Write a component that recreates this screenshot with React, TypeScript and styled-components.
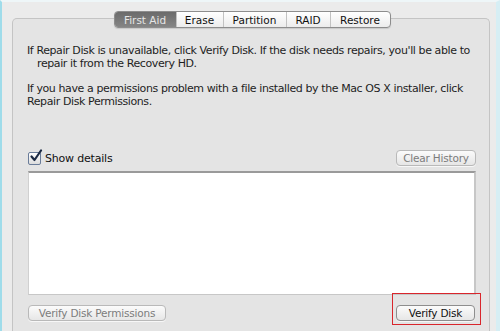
import React from 'react'
import styled, { createGlobalStyle } from 'styled-components'

const GlobalStyle = createGlobalStyle`
  html, body {
    margin: 0;
    padding: 0;
  }
  body {
    width: 500px;
    height: 331px;
    overflow: hidden;
    background: #ebebeb;
    font-family: 'DejaVu Sans', 'Liberation Sans', sans-serif;
    color: #1e1e1e;
  }
`

const Window = styled.div`
  width: 500px;
  height: 331px;
  box-sizing: border-box;
  background: #ebebeb;
  border-left: 2px solid #9fdcea;
  border-top: 2px solid #eef6f8;
  border-right: 4px solid #d6eef4;
  padding: 16px 6px 0 10px;
  overflow: hidden;
`

const GroupBox = styled.div`
  height: 330px;
  box-sizing: border-box;
  border: 1px solid #c4c4c4;
  border-bottom: none;
  border-radius: 5px 5px 0 0;
  background: #e4e4e4;
  display: flex;
  flex-direction: column;
  padding: 0 13px 0 14px;
`

const TabBar = styled.div`
  display: flex;
  align-self: center;
  margin: -8px 0 0 1px;
  border: 1px solid #8d8d8d;
  border-radius: 4px;
  background: linear-gradient(#ffffff, #ececec);
  box-shadow: 0 1px 1px rgba(0, 0, 0, 0.12);
  overflow: hidden;
`

const Tab = styled.div<{ $active?: boolean; $w: number }>`
  width: ${p => p.$w}px;
  height: 15px;
  display: flex;
  align-items: center;
  justify-content: center;
  font-size: 10.5px;
  color: ${p => (p.$active ? '#e6e6e6' : '#111')};
  background: ${p => (p.$active ? 'linear-gradient(#6b6b6b, #858585)' : 'transparent')};
  border-left: 1px solid ${p => (p.$active ? 'transparent' : '#c2c2c2')};
  &:first-child {
    border-left: none;
  }
`

const Paragraph = styled.p<{ $hanging?: boolean }>`
  margin: 0;
  font-size: 11px;
  line-height: 13px;
  letter-spacing: -0.4px;
  padding-left: ${p => (p.$hanging ? 10 : 0)}px;
  text-indent: ${p => (p.$hanging ? -10 : 0)}px;
`

const Intro = styled.div`
  display: flex;
  flex-direction: column;
  gap: 12px;
  margin-top: 16px;
`

const DetailsRow = styled.div`
  display: flex;
  align-items: center;
  justify-content: space-between;
  margin-top: 42px;
  padding-left: 1px;
`

const CheckLabel = styled.label`
  display: flex;
  align-items: center;
  gap: 4px;
  font-size: 11px;
  letter-spacing: -0.2px;
  color: #111;
`

const CheckBox = styled.span`
  width: 11px;
  height: 11px;
  border: 1px solid #6a7c99;
  border-radius: 2px;
  background: linear-gradient(#ffffff, #dcdcdc);
  position: relative;
  display: block;
`

const SmallButton = styled.div<{ $disabled?: boolean; $w: number }>`
  width: ${p => p.$w}px;
  height: 16px;
  box-sizing: border-box;
  display: flex;
  align-items: center;
  justify-content: center;
  font-size: 10.5px;
  letter-spacing: -0.2px;
  color: ${p => (p.$disabled ? '#7c7c7c' : '#111')};
  border: 1px solid ${p => (p.$disabled ? '#b9b9b9' : '#8e8e8e')};
  border-radius: 4px;
  background: linear-gradient(#fbfbfb, #e6e6e6);
  box-shadow: 0 1px 0 rgba(255, 255, 255, 0.7);
`

const LogArea = styled.div`
  margin-top: 5px;
  margin-left: 1px;
  height: 121px;
  background: #ffffff;
  border-top: 2px solid #9a9a9a;
  border-right: 2px solid #c7c7c7;
  border-bottom: 1px solid #c7c7c7;
  border-left: 1px solid #d0d0d0;
`

const BottomRow = styled.div`
  display: flex;
  align-items: flex-start;
  justify-content: space-between;
  margin-top: 10px;
  padding-left: 1px;
`

const Highlight = styled.div`
  margin-top: -12px;
  margin-right: -5px;
  padding: 10.5px 5px 3px 3px;
  border: 1.5px solid #d9262c;
`

export default function App() {
  return (
    <>
      <GlobalStyle />
      <Window>
        <GroupBox>
          <TabBar>
            <Tab $active $w={61}>First Aid</Tab>
            <Tab $w={46}>Erase</Tab>
            <Tab $w={62}>Partition</Tab>
            <Tab $w={43}>RAID</Tab>
            <Tab $w={59}>Restore</Tab>
          </TabBar>

          <Intro>
            <Paragraph $hanging>
              If Repair Disk is unavailable, click Verify Disk. If the disk needs repairs, you'll be able to repair it from the Recovery HD.
            </Paragraph>
            <Paragraph>
              If you have a permissions problem with a file installed by the Mac OS X installer, click Repair Disk Permissions.
            </Paragraph>
          </Intro>

          <DetailsRow>
            <CheckLabel>
              <CheckBox>
                <svg width="14" height="14" viewBox="0 0 14 14" style={{ position: 'absolute', left: 0, top: -4 }}>
                  <path d="M2.5 7.5 L5.5 11 L12 1.5" fill="none" stroke="#1c2a44" strokeWidth="2.2" strokeLinecap="round" strokeLinejoin="round" />
                </svg>
              </CheckBox>
              Show details
            </CheckLabel>
            <SmallButton $disabled $w={80}>Clear History</SmallButton>
          </DetailsRow>

          <LogArea />

          <BottomRow>
            <SmallButton $disabled $w={138}>Verify Disk Permissions</SmallButton>
            <Highlight>
              <SmallButton $w={79}>Verify Disk</SmallButton>
            </Highlight>
          </BottomRow>
        </GroupBox>
      </Window>
    </>
  )
}
